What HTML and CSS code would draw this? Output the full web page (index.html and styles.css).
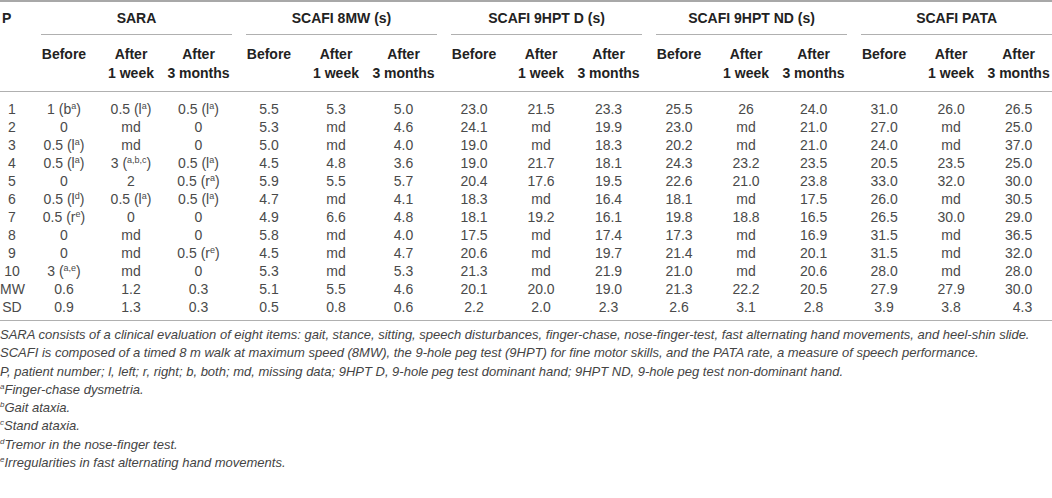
FILE: index.html
```html
<!DOCTYPE html>
<html lang="en">
<head>
  <meta charset="UTF-8" />
  <title>SARA and SCAFI scores</title>
  <link rel="stylesheet" href="styles.css">
</head>
<body>

  <table class="scores">
    <colgroup>
      <col class="c-p">
      <col class="c1"><col class="c2"><col class="c3">
      <col class="c1"><col class="c2"><col class="c3">
      <col class="c1"><col class="c2"><col class="c3">
      <col class="c1"><col class="c2"><col class="c3">
      <col class="c1"><col class="c2"><col class="c3">
    </colgroup>
    <thead>
      <tr class="groups">
        <th class="p-head">P</th>
        <th colspan="3"><div class="group">SARA</div></th>
        <th colspan="3"><div class="group">SCAFI 8MW (s)</div></th>
        <th colspan="3"><div class="group">SCAFI 9HPT D (s)</div></th>
        <th colspan="3"><div class="group">SCAFI 9HPT ND (s)</div></th>
        <th colspan="3"><div class="group">SCAFI PATA</div></th>
      </tr>
      <tr class="subs">
        <th></th>
        <th>Before</th><th>After<br>1 week</th><th>After<br>3 months</th>
        <th>Before</th><th>After<br>1 week</th><th>After<br>3 months</th>
        <th>Before</th><th>After<br>1 week</th><th>After<br>3 months</th>
        <th>Before</th><th>After<br>1 week</th><th>After<br>3 months</th>
        <th>Before</th><th>After<br>1 week</th><th>After<br>3 months</th>
      </tr>
    </thead>
    <tbody>
      <tr class="first">
        <td>1</td>
        <td>1 (b<sup>a</sup>)</td><td>0.5 (l<sup>a</sup>)</td><td>0.5 (l<sup>a</sup>)</td>
        <td>5.5</td><td>5.3</td><td>5.0</td>
        <td>23.0</td><td>21.5</td><td>23.3</td>
        <td>25.5</td><td>26</td><td>24.0</td>
        <td>31.0</td><td>26.0</td><td>26.5</td>
      </tr>
      <tr>
        <td>2</td>
        <td>0</td><td>md</td><td>0</td>
        <td>5.3</td><td>md</td><td>4.6</td>
        <td>24.1</td><td>md</td><td>19.9</td>
        <td>23.0</td><td>md</td><td>21.0</td>
        <td>27.0</td><td>md</td><td>25.0</td>
      </tr>
      <tr>
        <td>3</td>
        <td>0.5 (l<sup>a</sup>)</td><td>md</td><td>0</td>
        <td>5.0</td><td>md</td><td>4.0</td>
        <td>19.0</td><td>md</td><td>18.3</td>
        <td>20.2</td><td>md</td><td>21.0</td>
        <td>24.0</td><td>md</td><td>37.0</td>
      </tr>
      <tr>
        <td>4</td>
        <td>0.5 (l<sup>a</sup>)</td><td>3 (<sup>a,b,c</sup>)</td><td>0.5 (l<sup>a</sup>)</td>
        <td>4.5</td><td>4.8</td><td>3.6</td>
        <td>19.0</td><td>21.7</td><td>18.1</td>
        <td>24.3</td><td>23.2</td><td>23.5</td>
        <td>20.5</td><td>23.5</td><td>25.0</td>
      </tr>
      <tr>
        <td>5</td>
        <td>0</td><td>2</td><td>0.5 (r<sup>a</sup>)</td>
        <td>5.9</td><td>5.5</td><td>5.7</td>
        <td>20.4</td><td>17.6</td><td>19.5</td>
        <td>22.6</td><td>21.0</td><td>23.8</td>
        <td>33.0</td><td>32.0</td><td>30.0</td>
      </tr>
      <tr>
        <td>6</td>
        <td>0.5 (l<sup>d</sup>)</td><td>0.5 (l<sup>a</sup>)</td><td>0.5 (l<sup>a</sup>)</td>
        <td>4.7</td><td>md</td><td>4.1</td>
        <td>18.3</td><td>md</td><td>16.4</td>
        <td>18.1</td><td>md</td><td>17.5</td>
        <td>26.0</td><td>md</td><td>30.5</td>
      </tr>
      <tr>
        <td>7</td>
        <td>0.5 (r<sup>e</sup>)</td><td>0</td><td>0</td>
        <td>4.9</td><td>6.6</td><td>4.8</td>
        <td>18.1</td><td>19.2</td><td>16.1</td>
        <td>19.8</td><td>18.8</td><td>16.5</td>
        <td>26.5</td><td>30.0</td><td>29.0</td>
      </tr>
      <tr>
        <td>8</td>
        <td>0</td><td>md</td><td>0</td>
        <td>5.8</td><td>md</td><td>4.0</td>
        <td>17.5</td><td>md</td><td>17.4</td>
        <td>17.3</td><td>md</td><td>16.9</td>
        <td>31.5</td><td>md</td><td>36.5</td>
      </tr>
      <tr>
        <td>9</td>
        <td>0</td><td>md</td><td>0.5 (r<sup>e</sup>)</td>
        <td>4.5</td><td>md</td><td>4.7</td>
        <td>20.6</td><td>md</td><td>19.7</td>
        <td>21.4</td><td>md</td><td>20.1</td>
        <td>31.5</td><td>md</td><td>32.0</td>
      </tr>
      <tr>
        <td>10</td>
        <td>3 (<sup>a,e</sup>)</td><td>md</td><td>0</td>
        <td>5.3</td><td>md</td><td>5.3</td>
        <td>21.3</td><td>md</td><td>21.9</td>
        <td>21.0</td><td>md</td><td>20.6</td>
        <td>28.0</td><td>md</td><td>28.0</td>
      </tr>
      <tr>
        <td>MW</td>
        <td>0.6</td><td>1.2</td><td>0.3</td>
        <td>5.1</td><td>5.5</td><td>4.6</td>
        <td>20.1</td><td>20.0</td><td>19.0</td>
        <td>21.3</td><td>22.2</td><td>20.5</td>
        <td>27.9</td><td>27.9</td><td>30.0</td>
      </tr>
      <tr class="last-row">
        <td>SD</td>
        <td>0.9</td><td>1.3</td><td>0.3</td>
        <td>0.5</td><td>0.8</td><td>0.6</td>
        <td>2.2</td><td>2.0</td><td>2.3</td>
        <td>2.6</td><td>3.1</td><td>2.8</td>
        <td>3.9</td><td>3.8</td><td class="pad">4.3</td>
      </tr>
    </tbody>
  </table>

  <div class="notes">
    <p>SARA consists of a clinical evaluation of eight items: gait, stance, sitting, speech disturbances, finger-chase, nose-finger-test, fast alternating hand movements, and heel-shin slide.</p>
    <p>SCAFI is composed of a timed 8 m walk at maximum speed (8MW), the 9-hole peg test (9HPT) for fine motor skills, and the PATA rate, a measure of speech performance.</p>
    <p>P, patient number; l, left; r, right; b, both; md, missing data; 9HPT D, 9-hole peg test dominant hand; 9HPT ND, 9-hole peg test non-dominant hand.</p>
    <p><sup>a</sup>Finger-chase dysmetria.</p>
    <p><sup>b</sup>Gait ataxia.</p>
    <p><sup>c</sup>Stand ataxia.</p>
    <p><sup>d</sup>Tremor in the nose-finger test.</p>
    <p><sup>e</sup>Irregularities in fast alternating hand movements.</p>
  </div>

</body>
</html>
```

FILE: styles.css
```css
body {
  margin: 0;
  background: #fff;
  font-family: "Liberation Sans", Arial, sans-serif;
  color: #4a4a4a;
}

.scores {
  width: 1052px;
  border-collapse: collapse;
  table-layout: fixed;
  border-top: 2px solid #a8a8a8;
  font-size: 14px;
}

.c-p { width: 27px; }
.c1 { width: 70px; }
.c2 { width: 64px; }
.c3 { width: 71px; }

.scores th {
  color: #222;
  font-weight: bold;
  padding: 0;
}

.groups th {
  height: 33px;
  vertical-align: top;
  padding-top: 8px;
}

.groups .p-head {
  text-align: left;
  padding-left: 2px;
}

.group {
  margin-left: 14px;
  padding-bottom: 8px;
  border-bottom: 1px solid #b0b0b0;
}

.subs th {
  line-height: 19px;
  vertical-align: top;
  padding: 2px 0 8px 4px;
  border-bottom: 1px solid #b0b0b0;
}

.subs th:first-child {
  padding-left: 0;
}

.scores td {
  text-align: center;
  height: 18px;
  line-height: 18px;
  padding: 0 0 0 4px;
  white-space: nowrap;
}

.scores td:first-child {
  padding: 0 3px 0 0;
}

.scores tr.first td {
  padding-top: 8px;
}

.scores tr.last-row td {
  padding-bottom: 4px;
  border-bottom: 1px solid #b0b0b0;
}

.scores td.pad {
  padding-left: 12px;
}

sup {
  font-size: 9px;
  line-height: 0;
  vertical-align: 5px;
}

.notes {
  padding-top: 5px;
  font-size: 13px;
  font-style: italic;
  color: #444;
}

.notes p {
  margin: 0;
  line-height: 18.3px;
}

.notes sup {
  font-size: 8px;
}
```
